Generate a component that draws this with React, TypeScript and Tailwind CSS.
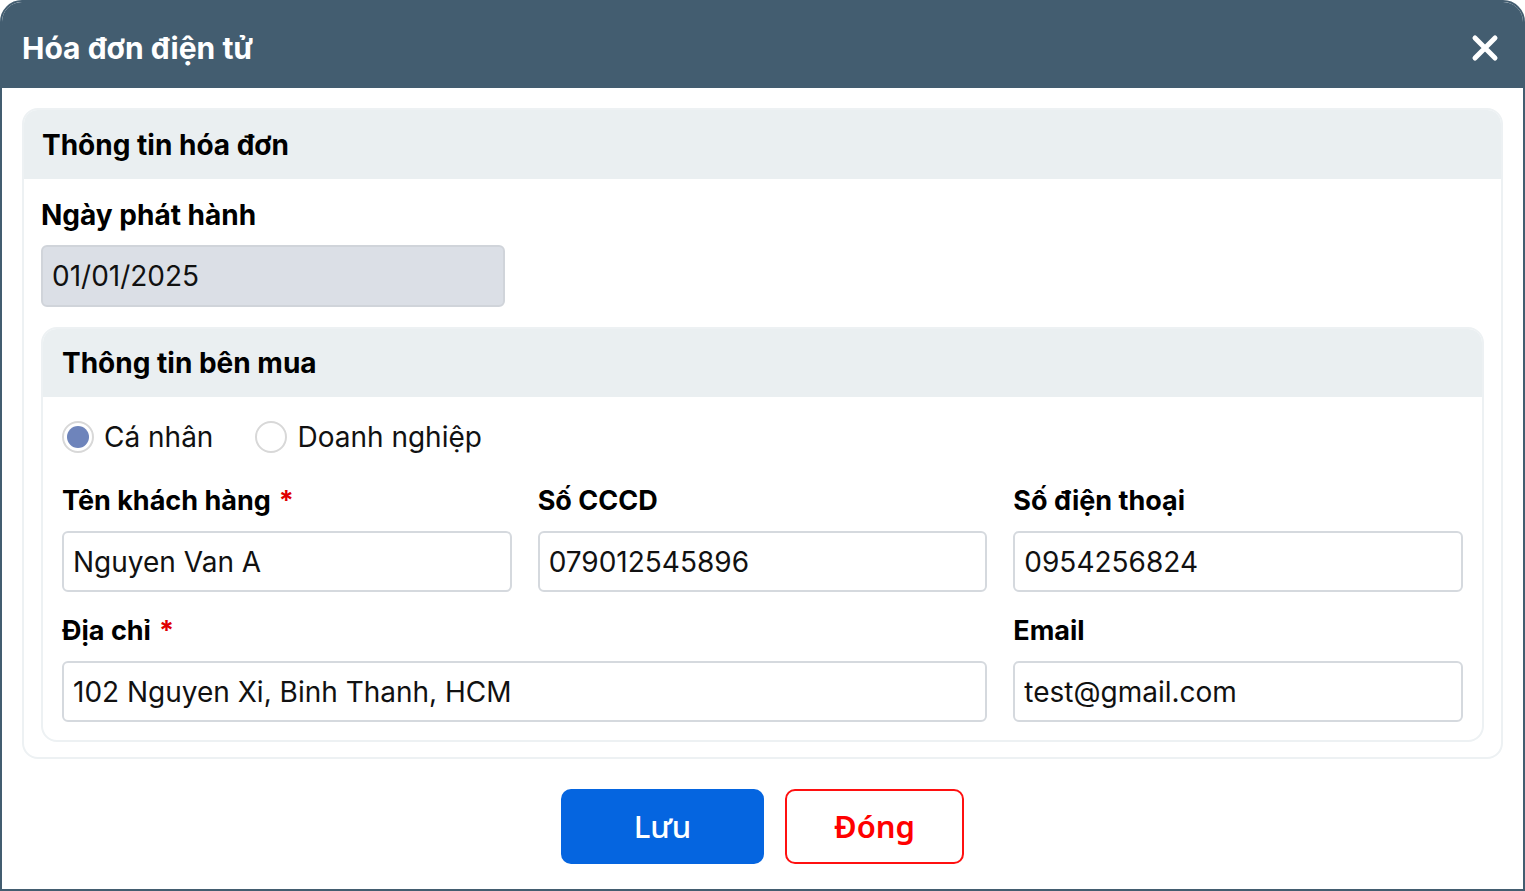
import React from 'react';

function Field({ label, value, required, className = '' }: { label: string; value: string; required?: boolean; className?: string }) {
  return (
    <div className={className}>
      <div className="text-[27px] font-bold text-black leading-[30px] h-[30px]">
        {label}
        {required && <span className="text-[#e00000] ml-2">*</span>}
      </div>
      <div className="mt-[15px] h-[61px] border-2 border-[#d5d9de] rounded-[6px] flex items-center px-[9px] text-[28px] text-[#111]">
        {value}
      </div>
    </div>
  );
}

export default function App() {
  return (
    <div className="w-[1525px] h-[891px] bg-white" style={{ fontFamily: 'Inter, "Noto Sans", sans-serif' }}>
      <div className="w-full h-full border-2 border-[#435d70] rounded-t-[22px] overflow-hidden flex flex-col">
        <div className="h-[86px] bg-[#435d70] flex items-center justify-between pl-[20px] pr-[24px] pt-[6px] shrink-0">
          <span className="text-white font-bold text-[30px]">Hóa đơn điện tử</span>
          <svg width="28" height="28" viewBox="0 0 28 28">
            <path d="M4 4L24 24M24 4L4 24" stroke="white" strokeWidth="5" strokeLinecap="round" />
          </svg>
        </div>
        <div className="px-[20px] pt-[20px]">
          <div className="border-2 border-[#edf1f3] rounded-[16px] overflow-hidden">
            <div className="h-[69px] bg-[#eaeff1] flex items-center px-[18px] text-[28px] font-bold text-black">Thông tin hóa đơn</div>
            <div className="px-[17px] pt-[20px] pb-[15px]">
              <div className="text-[28px] font-bold text-black leading-[32px]">Ngày phát hành</div>
              <div className="mt-[14px] w-[464px] h-[62px] bg-[#dbdfe6] border-2 border-[#d0d4da] rounded-[6px] flex items-center px-[9px] text-[28px] text-[#111]">01/01/2025</div>
              <div className="mt-[20px] border-2 border-[#edf1f3] rounded-[16px] overflow-hidden">
                <div className="h-[68px] bg-[#eaeff1] flex items-center px-[19px] text-[28px] font-bold text-black">Thông tin bên mua</div>
                <div className="px-[19px] pt-[20px] pb-[18px]">
                  <div className="flex items-center h-[40px] text-[28px] text-[#111]">
                    <span className="w-[32px] h-[32px] rounded-full border-2 border-[#d8d8d8] flex items-center justify-center">
                      <span className="w-[22px] h-[22px] rounded-full bg-[#6e84bb]" />
                    </span>
                    <span className="ml-[10px]">Cá nhân</span>
                    <span className="ml-[42px] w-[32px] h-[32px] rounded-full border-2 border-[#d8d8d8]" />
                    <span className="ml-[10px]">Doanh nghiệp</span>
                  </div>
                  <div className="mt-[29px] grid grid-cols-3 gap-x-[26px] gap-y-[24px]">
                    <Field label="Tên khách hàng" value="Nguyen Van A" required />
                    <Field label="Số CCCD" value="079012545896" />
                    <Field label="Số điện thoại" value="0954256824" />
                    <Field label="Địa chỉ" value="102 Nguyen Xi, Binh Thanh, HCM" required className="col-span-2" />
                    <Field label="Email" value="test@gmail.com" />
                  </div>
                </div>
              </div>
            </div>
          </div>
        </div>
        <div className="flex justify-center gap-[21px] mt-[30px]" style={{ fontFamily: '"Noto Sans", sans-serif' }}>
          <button className="w-[203px] h-[75px] bg-[#0565e0] rounded-[10px] text-white text-[31px] font-medium">Lưu</button>
          <button className="w-[179px] h-[75px] border-2 border-[#ff1010] rounded-[10px] text-[#ff0000] text-[31px] font-semibold">Đóng</button>
        </div>
      </div>
    </div>
  );
}
